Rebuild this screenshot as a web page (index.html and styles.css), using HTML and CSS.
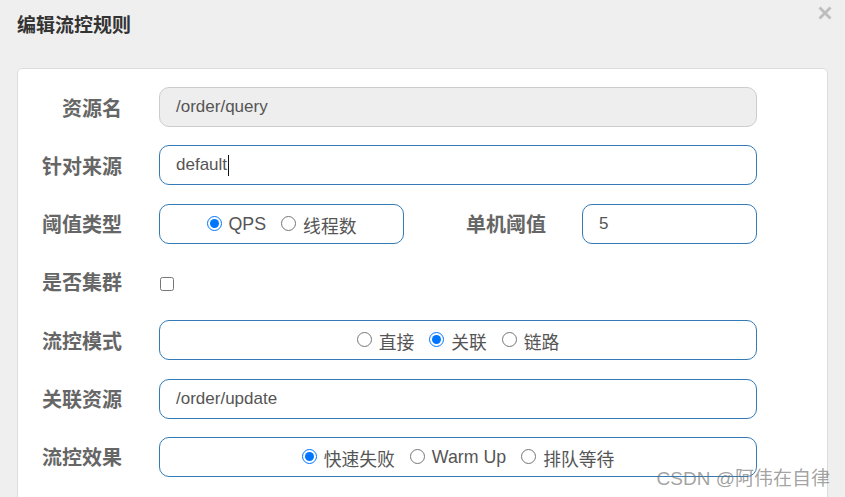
FILE: index.html
```html
<!DOCTYPE html>
<html lang="zh">
<head>
<meta charset="utf-8">
<title>编辑流控规则</title>
<link rel="stylesheet" href="styles.css">
</head>
<body>
<div class="modal">
  <div class="modal-header">
    <h4 class="title">编辑流控规则</h4>
    <button class="close" type="button" aria-label="关闭">
      <svg width="14" height="14" viewBox="0 0 14 14"><path d="M1.5 1.5 L12.5 12.5 M12.5 1.5 L1.5 12.5" stroke="#bdbdbd" stroke-width="2.8" stroke-linecap="butt" fill="none"/></svg>
    </button>
  </div>
  <div class="card">
    <div class="form">
      <div class="row">
        <div class="label">资源名</div>
        <div class="input disabled">/order/query</div>
      </div>
      <div class="row">
        <div class="label">针对来源</div>
        <div class="input">default<span class="caret"></span></div>
      </div>
      <div class="row">
        <div class="label">阈值类型</div>
        <div class="box box-small">
          <label class="radio"><input type="radio" name="grade" checked><span>QPS</span></label>
          <label class="radio"><input type="radio" name="grade"><span>线程数</span></label>
        </div>
        <div class="label label-wide">单机阈值</div>
        <div class="input input-small">5</div>
      </div>
      <div class="row">
        <div class="label">是否集群</div>
        <input class="check" type="checkbox">
      </div>
      <div class="row">
        <div class="label">流控模式</div>
        <div class="box">
          <label class="radio"><input type="radio" name="mode"><span>直接</span></label>
          <label class="radio"><input type="radio" name="mode" checked><span>关联</span></label>
          <label class="radio"><input type="radio" name="mode"><span>链路</span></label>
        </div>
      </div>
      <div class="row">
        <div class="label">关联资源</div>
        <div class="input">/order/update</div>
      </div>
      <div class="row">
        <div class="label">流控效果</div>
        <div class="box">
          <label class="radio"><input type="radio" name="effect" checked><span>快速失败</span></label>
          <label class="radio"><input type="radio" name="effect"><span>Warm Up</span></label>
          <label class="radio"><input type="radio" name="effect"><span>排队等待</span></label>
        </div>
      </div>
    </div>
  </div>
  <div class="watermark">CSDN @阿伟在自律</div>
</div>
</body>
</html>
```

FILE: styles.css
```css
html, body {
  margin: 0;
  padding: 0;
  background: #efefef;
  height: 100%;
  overflow: hidden;
}

body {
  font-family: "Liberation Sans", "Noto Sans CJK SC", sans-serif;
  color: #555;
}

.modal {
  position: relative;
  height: 100%;
}

.modal-header {
  box-sizing: border-box;
  height: 68px;
  padding: 16px 17px 0;
  position: relative;
}

.title {
  margin: 0;
  font-size: 19px;
  line-height: 20px;
  font-weight: bold;
  color: #333;
}

.close {
  position: absolute;
  top: 6px;
  right: 13px;
  width: 14px;
  height: 14px;
  padding: 0;
  margin: 0;
  border: 0;
  background: transparent;
  display: block;
}

.close svg {
  display: block;
}

.card {
  margin: 0 17px;
  background: #fff;
  border: 1px solid #dcdcdc;
  border-radius: 5px;
  padding: 18px 0 40px;
}

.form {
  display: flex;
  flex-direction: column;
  gap: 18.33px;
}

.row {
  display: flex;
  align-items: center;
  height: 40px;
}

.label {
  width: 104px;
  margin-right: 37px;
  text-align: right;
  font-size: 20px;
  font-weight: bold;
  color: #666;
  flex: none;
}

.label-wide {
  width: 142px;
  margin-right: 36px;
}

.input {
  box-sizing: border-box;
  width: 598px;
  height: 40px;
  border: 1px solid #337ab7;
  border-radius: 10px;
  padding: 0 16px;
  display: flex;
  align-items: center;
  font-size: 17px;
  color: #555;
  background: #fff;
}

.input.disabled {
  background: #eee;
  border-color: #ccc;
}

.input-small {
  width: 175px;
}

.caret {
  display: inline-block;
  width: 1px;
  height: 21px;
  background: #111;
  margin-left: 1px;
}

.box {
  box-sizing: border-box;
  width: 598px;
  height: 40px;
  border: 1px solid #337ab7;
  border-radius: 10px;
  display: flex;
  align-items: center;
  justify-content: center;
  gap: 15px;
  padding-top: 2px;
}

.box-small {
  width: 245px;
  flex: none;
}

.radio {
  display: inline-flex;
  align-items: center;
  gap: 7px;
  font-size: 17.8px;
  color: #555;
}

.radio input {
  margin: 0 0 3px;
  width: 15px;
  height: 15px;
}

.check {
  margin: 4px 0 0 1px;
  width: 14px;
  height: 14px;
}

.watermark {
  position: absolute;
  right: 15px;
  bottom: 7px;
  font-size: 19px;
  color: rgba(110, 110, 110, 0.65);
}
```
